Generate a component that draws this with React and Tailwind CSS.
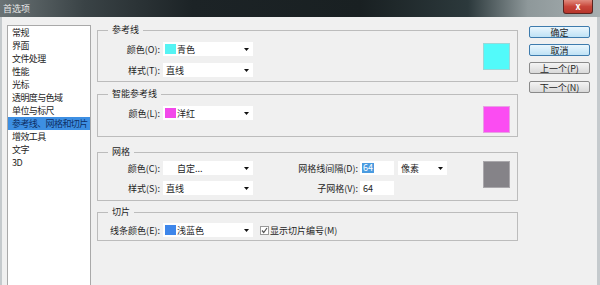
const items = [
  '常规',
  '界面',
  '文件处理',
  '性能',
  '光标',
  '透明度与色域',
  '单位与标尺',
  '参考线、网格和切片',
  '增效工具',
  '文字',
  '3D',
];

function Arrow() {
  return (
    <svg width="5" height="3" viewBox="0 0 5 3" className="shrink-0">
      <path d="M0 0h5L2.5 3z" fill="#111" />
    </svg>
  );
}

function Select({ width = 'w-[90px]', swatch, slot = false, text }) {
  return (
    <div className={`${width} h-[14px] bg-white flex items-center pl-[2px] pr-[4px]`}>
      {swatch && <span className={`w-[11px] h-[10px] mr-[1px] shrink-0 ${swatch}`} />}
      {!swatch && slot && <span className="w-[12px] shrink-0" />}
      {!swatch && !slot && <span className="w-[1px] shrink-0" />}
      <span className="flex-1 leading-none">{text}</span>
      <Arrow />
    </div>
  );
}

function Row({ label, children }) {
  return (
    <div className="flex items-center h-[14px]">
      <span className="w-[62px] text-right leading-none whitespace-nowrap">{label}</span>
      <div className="ml-[3px] flex items-center">{children}</div>
    </div>
  );
}

function Group({ title, className = '', children }) {
  return (
    <fieldset className={`border border-[#bcbcbc] ${className}`}>
      <legend className="ml-[10px] px-[4px] text-[9px] leading-[12px]">{title}</legend>
      {children}
    </fieldset>
  );
}

function Btn({ children, primary, className = '' }) {
  return (
    <div
      className={`h-[12px] flex items-center justify-center text-[9px] leading-none rounded-[2px] border ${
        primary
          ? 'border-[#3d7bad] bg-gradient-to-b from-[#eaf6fd] to-[#bfe2f5]'
          : 'border-[#8a8a8a] bg-gradient-to-b from-[#f4f4f4] to-[#d9d9d9]'
      } ${className}`}
    >
      {children}
    </div>
  );
}

export default function App() {
  return (
    <div className="w-[600px] h-[285px] overflow-hidden flex flex-col bg-[#f0f0f0] font-['Noto_Sans_CJK_SC','Noto_Sans',sans-serif] text-[9px] text-[#1e1e1e]">
      {/* title bar */}
      <div className="h-[17px] shrink-0 flex items-start justify-between bg-[linear-gradient(to_right,#6a7375_0%,#3a4346_14%,#1c2326_32%,#192022_60%,#2c393c_78%,#8e989a_88%,#a7afb1_100%)]">
        <span className="ml-[3px] mt-[3px] text-[9px] leading-[11px] text-[#e6e6e6]">首选项</span>
        <div className="mr-[7px] w-[30px] h-[14px] rounded-b-[3px] border border-t-0 border-[#5a2420] bg-gradient-to-b from-[#e08a7e] via-[#c8453a] to-[#b7352b] flex items-center justify-center text-white text-[9px] font-bold leading-none">
          x
        </div>
      </div>

      {/* body */}
      <div className="flex-1 flex border-l-2 border-r-[3px] border-[#c5cacd] pl-[5px] pr-[7px] pt-[8px]">
        {/* category list */}
        <div className="w-[84px] bg-white border border-[#a9a9a9] border-b-0 flex flex-col">
          {items.map((it, i) => (
            <div
              key={it}
              className={`h-[13px] leading-[13px] pl-[4px] whitespace-nowrap tracking-[-0.6px] ${
                i === 7 ? 'bg-[#3d8fe3] text-[#0e2f66]' : ''
              }`}
            >
              {it}
            </div>
          ))}
        </div>

        {/* settings */}
        <div className="w-[421px] ml-[6px] -mt-[1px] flex flex-col">
          <Group title="参考线">
            <div className="flex items-start justify-between pt-[6px] pb-[4px] pr-[7px]">
              <div className="flex flex-col gap-[7px]">
                <Row label="颜色(O):">
                  <Select swatch="bg-[#55f3f3]" text="青色" />
                </Row>
                <Row label="样式(T):">
                  <Select text="直线" />
                </Row>
              </div>
              <div className="w-[27px] h-[27px] mt-[1px] bg-[#52fafa] border border-[#9ad8d8]" />
            </div>
          </Group>

          <Group title="智能参考线" className="mt-[6px]">
            <div className="flex items-start justify-between pt-[6px] pb-[3px] pr-[7px]">
              <Row label="颜色(L):">
                <Select swatch="bg-[#f248ea]" text="洋红" />
              </Row>
              <div className="w-[27px] h-[27px] bg-[#fb4cf2] border border-[#e7a0e3]" />
            </div>
          </Group>

          <Group title="网格" className="mt-[9px]">
            <div className="flex items-start pt-[3px] pb-[5px] pr-[7px]">
              <div className="flex flex-col gap-[6px]">
                <Row label="颜色(C):">
                  <Select slot text="自定..." />
                </Row>
                <Row label="样式(S):">
                  <Select text="直线" />
                </Row>
              </div>
              <div className="ml-[35px] flex flex-col gap-[6px]">
                <div className="flex items-center h-[14px]">
                  <span className="w-[70px] text-right leading-none whitespace-nowrap">网格线间隔(D):</span>
                  <div className="ml-[2px] w-[34px] h-[14px] bg-white flex items-center pl-[2px]">
                    <span className="bg-[#4a9be0] text-white leading-[10px] px-[1px]">64</span>
                  </div>
                  <div className="ml-[4px]">
                    <Select width="w-[49px]" text="像素" />
                  </div>
                </div>
                <div className="flex items-center h-[14px]">
                  <span className="w-[70px] text-right leading-none whitespace-nowrap">子网格(V):</span>
                  <div className="ml-[2px] w-[34px] h-[14px] bg-white flex items-center pl-[3px] leading-none">
                    64
                  </div>
                </div>
              </div>
              <div className="ml-auto w-[27px] h-[27px] bg-[#858388] border border-[#a9a7ab]" />
            </div>
          </Group>

          <Group title="切片" className="mt-[5px]">
            <div className="flex items-center pt-[5px] pb-[3px]">
              <Row label="线条颜色(E):">
                <Select swatch="bg-[#3e86ea]" text="浅蓝色" />
              </Row>
              <div className="ml-[7px] w-[9px] h-[9px] bg-white border border-[#9a9a9a] flex items-center justify-center">
                <svg width="7" height="7" viewBox="0 0 7 7">
                  <path d="M1 3.5l1.7 2L6 1" fill="none" stroke="#555" strokeWidth="1.2" />
                </svg>
              </div>
              <span className="ml-[1px] leading-none">显示切片编号(M)</span>
            </div>
          </Group>
        </div>

        {/* buttons */}
        <div className="w-[61px] ml-[11px] pt-[1px] flex flex-col">
          <Btn primary>确定</Btn>
          <Btn primary className="mt-[6px]">取消</Btn>
          <Btn className="mt-[6px]">上一个(P)</Btn>
          <Btn className="mt-[7px]">下一个(N)</Btn>
        </div>
      </div>
    </div>
  );
}
